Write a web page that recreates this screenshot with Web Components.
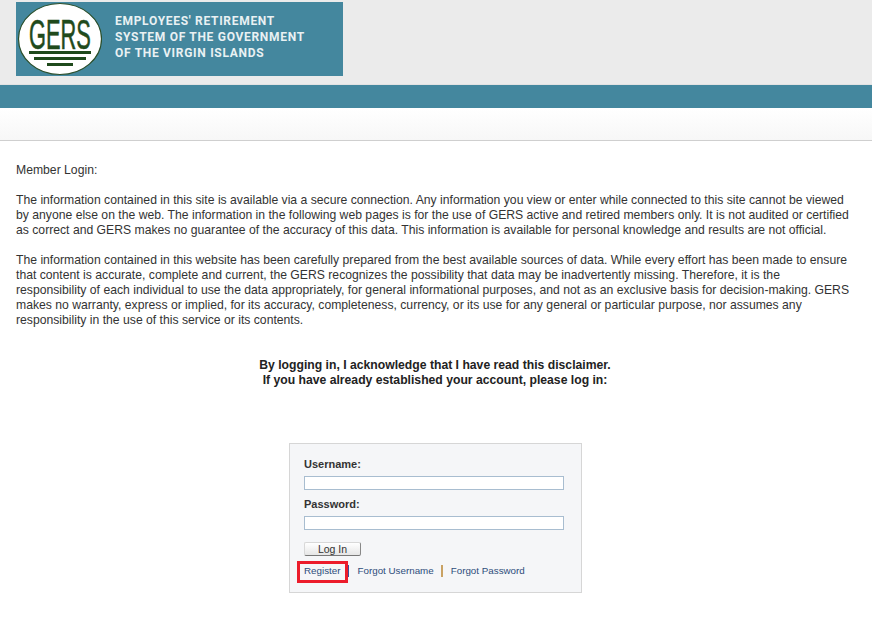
<!DOCTYPE html>
<html>
<head>
<meta charset="utf-8">
<title>Member Login</title>
<style>
  html, body { margin: 0; padding: 0; background: #fff; }
  body { font-family: "Liberation Sans", Arial, sans-serif; font-size: 12.2px; color: #333; }
</style>
</head>
<body>
<gers-header></gers-header>
<gers-disclaimer>
  <p>Member Login:</p>
  <p>The information contained in this site is available via a secure connection. Any information you view or enter while connected to this site cannot be viewed<br>by anyone else on the web. The information in the following web pages is for the use of GERS active and retired members only. It is not audited or certified<br>as correct and GERS makes no guarantee of the accuracy of this data. This information is available for personal knowledge and results are not official.</p>
  <p>The information contained in this website has been carefully prepared from the best available sources of data. While every effort has been made to ensure<br>that content is accurate, complete and current, the GERS recognizes the possibility that data may be inadvertently missing. Therefore, it is the<br>responsibility of each individual to use the data appropriately, for general informational purposes, and not as an exclusive basis for decision-making. GERS<br>makes no warranty, express or implied, for its accuracy, completeness, currency, or its use for any general or particular purpose, nor assumes any<br>responsibility in the use of this service or its contents.</p>
  <p class="ack" slot="ack">By logging in, I acknowledge that I have read this disclaimer.<br>If you have already established your account, please log in:</p>
</gers-disclaimer>
<gers-login></gers-login>

<script>
const headerTemplate = document.createElement('template');
headerTemplate.innerHTML = `
  <style>
    :host { display: block; }
    .top { height: 84px; background: #ebebeb; box-sizing: border-box; padding: 2px 0 0 16px; }
    .logo { width: 327px; height: 74px; background: #44879e; display: flex; box-sizing: border-box; }
    .logo svg { flex: none; display: block; }
    .name {
      margin: 11px 0 0 13px; color: #e9f1f3; font: bold 12px/16px "Roboto", sans-serif;
      letter-spacing: 0.7px; white-space: nowrap;
    }
    .gap { height: 1px; background: #e2e2e2; }
    .bar { height: 23px; background: #44879e; }
    .band { height: 32px; background: linear-gradient(#fff, #f7f7f7); border-bottom: 1px solid #cfcfcf; }
  </style>
  <div class="top">
    <div class="logo">
      <svg width="86" height="74" viewBox="0 0 86 74">
        <ellipse cx="44" cy="37" rx="41.5" ry="35.5" fill="#fff" stroke="#2c4f2a" stroke-width="1.2"/>
        <text transform="translate(13 47) scale(.52 1)" font-family="Liberation Sans, sans-serif" font-size="42" stroke="#1f4a1c" stroke-width=".6" fill="#1f4a1c">GERS</text>
        <rect x="13" y="49" width="62" height="3" fill="#1f4a1c"/>
        <rect x="18" y="55" width="52" height="3" fill="#1f4a1c"/>
        <rect x="31" y="61" width="26" height="3" fill="#1f4a1c"/>
      </svg>
      <div class="name">EMPLOYEES' RETIREMENT<br>SYSTEM OF THE GOVERNMENT<br>OF THE VIRGIN ISLANDS</div>
    </div>
  </div>
  <div class="gap"></div>
  <div class="bar"></div>
  <div class="band"></div>
`;

class GersHeader extends HTMLElement {
  constructor() {
    super();
    this.attachShadow({ mode: 'open' }).appendChild(headerTemplate.content.cloneNode(true));
  }
}
customElements.define('gers-header', GersHeader);

const disclaimerTemplate = document.createElement('template');
disclaimerTemplate.innerHTML = `
  <style>
    :host { display: block; padding: 22px 16px 0; line-height: 15px; white-space: nowrap; }
    ::slotted(p) { margin: 0 0 15px; }
    ::slotted(.ack) { margin: 30px 2px 0 0; font-weight: bold; text-align: center; color: #222; }
  </style>
  <slot></slot>
  <slot name="ack"></slot>
`;

class GersDisclaimer extends HTMLElement {
  constructor() {
    super();
    this.attachShadow({ mode: 'open' }).appendChild(disclaimerTemplate.content.cloneNode(true));
  }
}
customElements.define('gers-disclaimer', GersDisclaimer);

const loginTemplate = document.createElement('template');
loginTemplate.innerHTML = `
  <style>
    :host { display: block; width: 293px; margin: 55px 0 0 289px; }
    .box {
      position: relative; box-sizing: border-box; height: 150px; padding: 13px 16px 0 14px;
      background: #f5f6f8; border: 1px solid #d6d6d6;
    }
    label { display: block; font-size: 11px; font-weight: bold; line-height: 14px; color: #333; }
    input {
      display: block; box-sizing: border-box; width: 260px; height: 14px; margin: 5px 0 7px;
      padding: 0; background: #fff; border: 1px solid #a8bdd0; outline: none;
    }
    button {
      display: block; box-sizing: border-box; width: 57px; height: 14px; margin: 12px 0 0; padding: 0;
      font: 10.5px/12px "Liberation Sans", sans-serif; color: #333;
      background: linear-gradient(#fff, #e6e6e6); border: 1px solid #d8d8d8;
      border-right-color: #888; border-bottom-color: #777; border-radius: 2px;
    }
    .links { display: flex; align-items: center; margin-top: 8px; font-size: 9.8px; line-height: 14px; }
    a { color: #2e4d7b; text-decoration: none; }
    .sep { flex: none; width: 2px; height: 12px; margin: 0 8px 0 7px; }
    .blue { background: #3b4f9c; }
    .tan { background: #c9a263; }
    .mark {
      position: absolute; left: 7px; top: 117px; width: 51px; height: 22px;
      box-sizing: border-box; border: 3px solid #ec1c2b;
    }
  </style>
  <div class="box">
    <label for="user">Username:</label>
    <input id="user" type="text">
    <label for="pass">Password:</label>
    <input id="pass" type="password">
    <button type="button">Log In</button>
    <div class="links">
      <a href="#">Register</a><span class="sep blue"></span>
      <a href="#">Forgot Username</a><span class="sep tan"></span>
      <a href="#">Forgot Password</a>
    </div>
    <div class="mark"></div>
  </div>
`;

class GersLogin extends HTMLElement {
  constructor() {
    super();
    this.attachShadow({ mode: 'open' }).appendChild(loginTemplate.content.cloneNode(true));
  }
}
customElements.define('gers-login', GersLogin);
</script>
</body>
</html>
